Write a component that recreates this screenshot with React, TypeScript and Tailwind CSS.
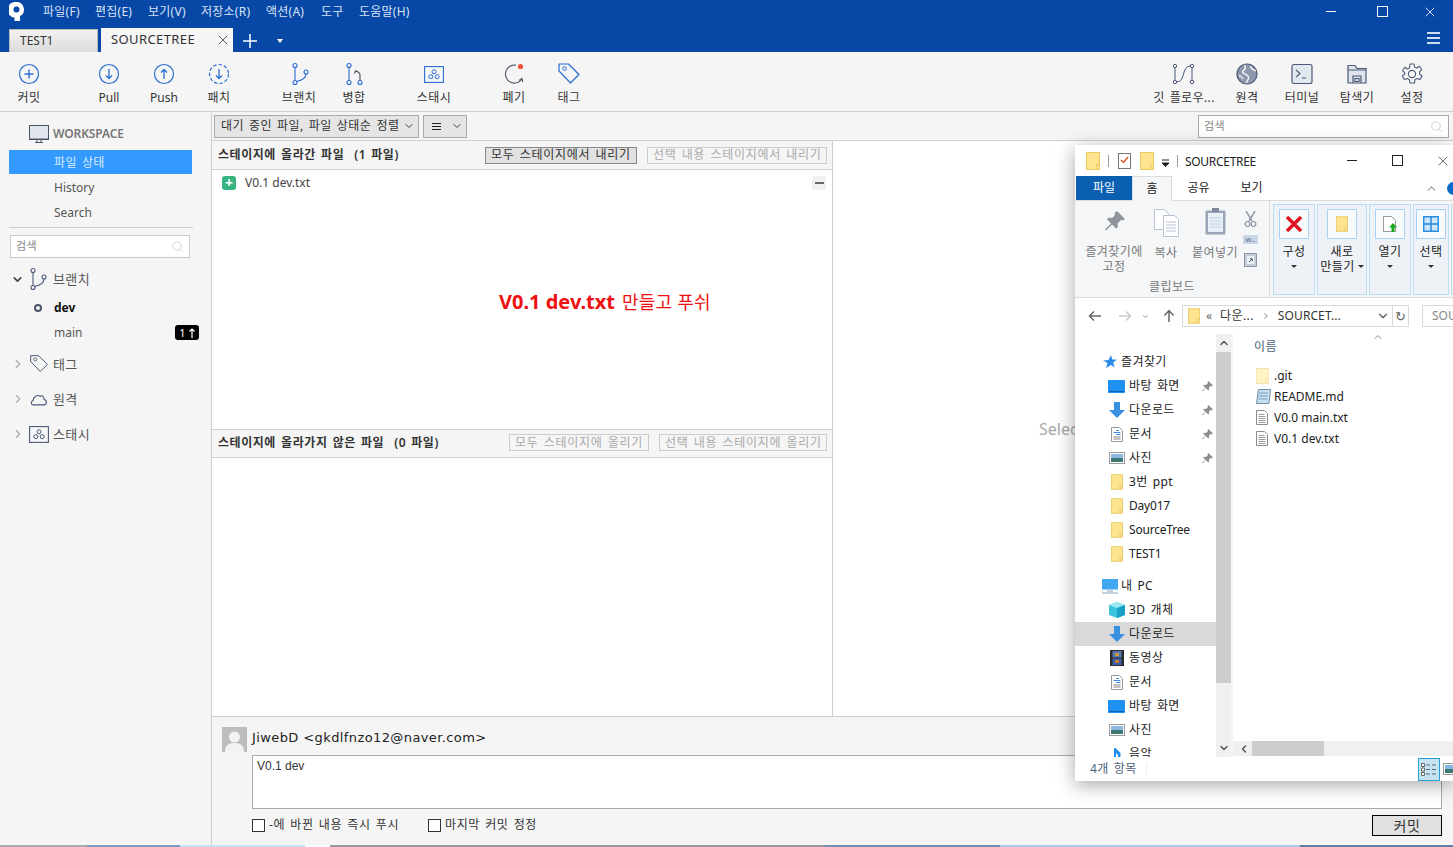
import type { ReactNode } from "react";
import { ChevronDown, ChevronRight, ChevronUp, Search, X } from "lucide-react";

const BLUE = "#2a6dd2";
const SLATE = "#4a5a78";
// Korean glyphs run wider in the original UI font
const KO = "tracking-[0.4px] [word-spacing:1.5px]";
const ko = (s: string) => (/[가-힣]/.test(s) ? KO : "");

function Ico({ children, w = 24, h = 24, vb }: { children: ReactNode; w?: number; h?: number; vb?: string }) {
  return (
    <svg width={w} height={h} viewBox={vb ?? `0 0 ${w} ${h}`} fill="none" className="shrink-0">
      {children}
    </svg>
  );
}

function CircleIcon({ kind }: { kind: "plus" | "down" | "up" | "fetch" }) {
  return (
    <Ico>
      <circle cx="12" cy="12" r="9.5" stroke={BLUE} strokeWidth="1.2" strokeDasharray={kind === "fetch" ? "3.5 2" : undefined} />
      {kind === "plus" && <path d="M12 7.5v9M7.5 12h9" stroke={BLUE} strokeWidth="1.4" />}
      {(kind === "down" || kind === "fetch") && <path d="M12 7v9.5M9 13.5l3 3 3-3" stroke={BLUE} strokeWidth="1.3" />}
      {kind === "up" && <path d="M12 17V7.5M9 10.5l3-3 3 3" stroke={BLUE} strokeWidth="1.3" />}
    </Ico>
  );
}

function BranchIcon({ color = BLUE }: { color?: string }) {
  return (
    <Ico>
      <circle cx="8" cy="3.5" r="2" stroke={color} strokeWidth="1.1" />
      <circle cx="8" cy="20.5" r="2" stroke={color} strokeWidth="1.1" />
      <circle cx="19" cy="10" r="2" stroke={color} strokeWidth="1.1" />
      <path d="M8 5.5v13M19 12c0 4-5 6.5-9.5 7.5" stroke={color} strokeWidth="1.1" />
    </Ico>
  );
}

function MergeIcon() {
  return (
    <Ico>
      <circle cx="7" cy="3.5" r="2" stroke={BLUE} strokeWidth="1.1" />
      <circle cx="7" cy="20.5" r="2" stroke={BLUE} strokeWidth="1.1" />
      <circle cx="18" cy="20.5" r="2" stroke={BLUE} strokeWidth="1.1" />
      <path d="M7 5.5v13" stroke={BLUE} strokeWidth="1.1" />
      <path d="M18 18.5V13c0-2-1.5-3-3.5-3.5M12.5 11.5l1-2.5 2.5 .5" stroke="#444c5c" strokeWidth="1.1" />
    </Ico>
  );
}

function StashIcon({ color = BLUE, w = 20, h = 17 }: { color?: string; w?: number; h?: number }) {
  return (
    <Ico w={w} h={h} vb="0 0 20 17">
      <rect x=".6" y=".6" width="18.8" height="15.8" stroke={color} strokeWidth="1.1" fill="#fff" fillOpacity=".2" />
      <circle cx="10" cy="5.7" r="2" stroke={color} strokeWidth="1" />
      <circle cx="6.8" cy="10.7" r="2" stroke={color} strokeWidth="1" />
      <circle cx="13.2" cy="10.7" r="2" stroke={color} strokeWidth="1" />
    </Ico>
  );
}

function DiscardIcon() {
  return (
    <Ico>
      <path d="M14 3.2A9 9 0 1 0 20 17" stroke="#5a6270" strokeWidth="1.2" />
      <path d="M17 18.5l3-2 .8 3.6" stroke="#5a6270" strokeWidth="1.2" />
      <circle cx="18.5" cy="4.5" r="2.6" fill="#f0533a" />
    </Ico>
  );
}

function TagIcon({ color = BLUE, size = 24 }: { color?: string; size?: number }) {
  return (
    <svg width={size} height={size} viewBox="0 0 24 24" fill="none" className="shrink-0">
      <path d="M2 2h9.500L22 12.500 13.500 21 2 9z" stroke={color} strokeWidth="1.2" strokeLinejoin="round" />
      <circle cx="7.500" cy="6.500" r="1.800" stroke={color} strokeWidth="1" />
    </svg>
  );
}

function FlowIcon() {
  return (
    <Ico>
      <circle cx="3" cy="4" r="1.7" stroke={SLATE} strokeWidth="1" />
      <circle cx="3" cy="20" r="1.7" stroke={SLATE} strokeWidth="1" />
      <circle cx="20" cy="4" r="1.7" stroke={SLATE} strokeWidth="1" />
      <circle cx="20" cy="20" r="1.7" stroke={SLATE} strokeWidth="1" />
      <path d="M3 6v12M20 6v12M18.500 4C9 4 14 20 4.500 20" stroke={SLATE} strokeWidth="1" />
    </Ico>
  );
}

function GlobeIcon() {
  return (
    <Ico>
      <circle cx="12" cy="12" r="10" fill="#8d98ae" stroke={SLATE} strokeWidth="1.2" />
      <path d="M9 3c3 2 1 4-1 6s3 3 5 5-1 5-2 7M16 4c-1 3 3 4 5 5M4 14c2-1 3 1 4 3" stroke="#f5f5f5" strokeWidth="1.4" />
    </Ico>
  );
}

function TerminalIcon() {
  return (
    <Ico>
      <rect x="2" y="2.5" width="20" height="19" rx="2" fill="#e3e7ee" stroke={SLATE} strokeWidth="1.2" />
      <path d="M6 8l4 3.5L6 15M12 16h4" stroke={SLATE} strokeWidth="1.1" />
    </Ico>
  );
}

function ExplorerIcon() {
  return (
    <Ico>
      <path d="M3 21V3.5h7l2 3h9V21z" fill="#dfe3ea" stroke={SLATE} strokeWidth="1.2" />
      <path d="M3 8h18" stroke={SLATE} strokeWidth="1" />
      <path d="M8 21v-7h8v7M10 16.5h4v3h-4z" stroke={SLATE} strokeWidth="1.2" />
    </Ico>
  );
}

function GearIcon() {
  return (
    <Ico>
      <path
        d="M10 2h4l.6 3 2.2 1 2.6-1.7 2.4 3.4-2.2 2 .1 2.5 2.4 1.7-2.1 3.6-2.9-1.1-2.1 1.3-.5 3.3H10l-.6-3.3-2.2-1.3-2.9 1.1-2-3.6 2.4-1.7V10.7l-2.2-2L4.800 5.300 7.300 7l2.2-1z"
        stroke={SLATE}
        strokeWidth="1.1"
        strokeLinejoin="round"
      />
      <circle cx="12" cy="12" r="3.6" stroke={SLATE} strokeWidth="1.1" />
    </Ico>
  );
}

function MonitorIcon() {
  return (
    <Ico w={20} h={18}>
      <rect x=".5" y=".5" width="19" height="13.5" fill="#e1e5ec" stroke="#4a5568" />
      <path d="M0 14.5h20M6 17.5h8M8 15v2M12 15v2" stroke="#4a5568" />
    </Ico>
  );
}

function CloudIcon() {
  return (
    <Ico w={18} h={13} vb="0 0 20 14">
      <path d="M5 13H3.500C1 13 .5 9 3.500 8.200 3.500 4 8 1 11.500 3.500 14 1.500 16 5 15.500 7c3.500.3 4 6-.5 6z" stroke={SLATE} strokeWidth="1.2" />
    </Ico>
  );
}

function ToolButton({ icon, label, className = "" }: { icon: ReactNode; label: string; className?: string }) {
  return (
    <div className={`flex w-[55px] shrink-0 flex-col items-center ${className}`}>
      <div className="flex h-[24px] items-center justify-center">{icon}</div>
      <span className={`mt-[3px] whitespace-nowrap pl-px text-[12px] leading-[17px] text-[#333] ${ko(label)}`}>{label}</span>
    </div>
  );
}

function Folder({ w = 14, h = 18, pale = false }: { w?: number; h?: number; pale?: boolean }) {
  return (
    <svg width={w} height={h} viewBox="0 0 14 18" className="shrink-0">
      <rect x=".5" y=".5" width="13" height="17" fill={pale ? "#fff3c8" : "#ffe48f"} stroke={pale ? "#f0dfa0" : "#e9c95f"} />
      <path d="M10.500 17.500v-5h3" fill="none" stroke={pale ? "#f0dfa0" : "#e9c95f"} />
    </svg>
  );
}

function TextDoc() {
  return (
    <svg width={12} height={15} viewBox="0 0 12 15" className="shrink-0">
      <path d="M.5.5h8l3 3v11H.5z" fill="#fff" stroke="#8a8a8a" />
      <path d="M2.500 4.500h6M2.500 6.500h7M2.500 8.500h7M2.500 10.500h7M2.500 12.500h7" stroke="#9a9a9a" />
    </svg>
  );
}

function NavIcon({ kind }: { kind: string }) {
  if (kind === "star")
    return (
      <svg width={14} height={14} viewBox="0 0 14 14" className="shrink-0">
        <path d="M8 0l1.300 4.600H14l-3.800 3 1.400 5L8 10 3 13l1.500-5L0 5.500l5.500-.6z" fill="#2b8be6" />
      </svg>
    );
  if (kind === "desk")
    return (
      <svg width={17} height={13} viewBox="0 0 17 13" className="shrink-0">
        <rect width="17" height="13" rx="1" fill="#1e90f0" />
        <path d="M1 11.500h15" stroke="#0a5fb0" />
      </svg>
    );
  if (kind === "down")
    return (
      <svg width={16} height={16} viewBox="0 0 16 16" className="shrink-0">
        <path d="M5 0h6v8h5l-8 8-8-8h5z" fill="#3a8fe0" />
      </svg>
    );
  if (kind === "doc")
    return (
      <svg width={12} height={15} viewBox="0 0 12 15" className="shrink-0">
        <path d="M.5.5h8l3 3v11H.5z" fill="#fff" stroke="#999" />
        <path d="M5 3.500h3M2.500 5.500h7M5 7.500h4.500" stroke="#3a8fe0" />
        <path d="M2.500 10h7M2.500 12h7" stroke="#888" />
      </svg>
    );
  if (kind === "pic")
    return (
      <svg width={16} height={12} viewBox="0 0 16 12" className="shrink-0">
        <rect x=".5" y=".5" width="15" height="11" fill="#fff" stroke="#999" />
        <rect x="2" y="2" width="12" height="4" fill="#8ab8e0" />
        <rect x="2" y="6" width="12" height="4" fill="#3f7a70" />
      </svg>
    );
  if (kind === "pc")
    return (
      <svg width={17} height={15} viewBox="0 0 17 15" className="shrink-0">
        <rect width="16" height="10.500" fill="#3fa8f0" />
        <path d="M5 12h6M0 14h16" stroke="#8aa6c0" strokeWidth="1.200" />
      </svg>
    );
  if (kind === "cube")
    return (
      <svg width={16} height={16} viewBox="0 0 16 16" className="shrink-0">
        <path d="M8 0l8 3v10l-8 3-8-3V3z" fill="#3cc4dc" />
        <path d="M0 3l8 3 8-3-8-3z" fill="#9ce8f0" />
        <path d="M8 6v10l8-3V3z" fill="#1aa0c4" />
      </svg>
    );
  if (kind === "film")
    return (
      <svg width={14} height={16} viewBox="0 0 14 16" className="shrink-0">
        <rect width="14" height="16" fill="#2c2c2c" />
        <rect x="2.500" y="1" width="9" height="6.500" fill="#5478b0" />
        <rect x="2.500" y="8.500" width="9" height="6.500" fill="#3a62a8" />
        <rect x="5" y="3" width="4" height="3" fill="#c89a40" />
        <rect x="5" y="10" width="4" height="3" fill="#c87a30" />
      </svg>
    );
  if (kind === "music")
    return (
      <svg width={8} height={12} viewBox="0 0 8 12" className="shrink-0">
        <path d="M1 0h1.500l5 5v7H5V7L3 5v7H1z" fill="#1e90f0" />
      </svg>
    );
  return <Folder w={12} h={16} />;
}

function Pin() {
  return (
    <svg width={11} height={11} viewBox="0 0 11 11" className="shrink-0">
      <path d="M6.500 0L11 4.500 9.800 5.200 8.600 5l-1.700 1.700.2 2L6.200 9.500 3.800 7 .6 10.400 0 10l3.400-3.200L1.200 4.500 2 3.800l2 .2L5.800 2.300 5.600 1z" fill="#8b8f96" />
    </svg>
  );
}

const MENUS = [
  ["파일(F)", "w-[52px]"],
  ["편집(E)", "w-[53px]"],
  ["보기(V)", "w-[53px]"],
  ["저장소(R)", "w-[65px]"],
  ["액션(A)", "w-[55px]"],
  ["도구", "w-[38px]"],
  ["도움말(H)", "w-[60px]"],
];

const NAV: { kind: string; label: string; pin?: boolean; sel?: boolean; root?: boolean; gap?: boolean }[] = [
  { kind: "star", label: "즐겨찾기", root: true },
  { kind: "desk", label: "바탕 화면", pin: true },
  { kind: "down", label: "다운로드", pin: true },
  { kind: "doc", label: "문서", pin: true },
  { kind: "pic", label: "사진", pin: true },
  { kind: "folder", label: "3번 ppt" },
  { kind: "folder", label: "Day017" },
  { kind: "folder", label: "SourceTree" },
  { kind: "folder", label: "TEST1" },
  { kind: "pc", label: "내 PC", root: true, gap: true },
  { kind: "cube", label: "3D 개체" },
  { kind: "down", label: "다운로드", sel: true },
  { kind: "film", label: "동영상" },
  { kind: "doc", label: "문서" },
  { kind: "desk", label: "바탕 화면" },
  { kind: "pic", label: "사진" },
  { kind: "music", label: "음악" },
];

function Explorer() {
  return (
    <div className="absolute left-[1075px] top-[145px] flex h-[636px] w-[378px] flex-col overflow-hidden bg-white text-[12px] text-[#222] shadow-[0_4px_18px_rgba(0,0,0,0.35)]">
      {/* title */}
      <div className="flex h-[31px] shrink-0 items-center pl-[11px]">
        <Folder />
        <div className="ml-[8px] h-[12px] w-px bg-[#999]" />
        <svg width={13} height={17} viewBox="0 0 13 17" className="ml-[9px] shrink-0">
          <rect x=".5" y="1.500" width="12" height="15" fill="#fff" stroke="#777" />
          <path d="M3 8l2.500 2.500L10 5" fill="none" stroke="#e0562a" strokeWidth="1.400" />
        </svg>
        <div className="ml-[9px]">
          <Folder />
        </div>
        <svg width={9} height={8} viewBox="0 0 9 8" className="ml-[7px] mt-[4px] shrink-0">
          <path d="M1 1h7M1 4h7L4.500 7.500z" stroke="#222" fill="#222" />
        </svg>
        <div className="ml-[7px] h-[12px] w-px bg-[#999]" />
        <span className="ml-[7px] pt-[2px] text-[12px] tracking-[-0.3px]">SOURCETREE</span>
        <div className="ml-auto flex items-center pr-[2px]">
          <div className="h-px w-[10px] bg-[#222]" />
          <div className="ml-[35px] size-[11px] border border-[#222]" />
          <X size={16} strokeWidth={1} color="#222" className="ml-[32px]" />
        </div>
      </div>
      {/* tabs */}
      <div className="flex h-[25px] shrink-0 items-stretch border-b border-[#dadbdc] pl-px">
        <div className="flex w-[56px] items-center justify-center bg-[#0a5fb0] text-white">파일</div>
        <div className="-mb-px flex w-[40px] items-center justify-center border-x border-t border-[#dadbdc] bg-[#f5f6f7]">홈</div>
        <div className="flex w-[53px] items-center justify-center">공유</div>
        <div className="flex w-[53px] items-center justify-center">보기</div>
        <ChevronUp size={13} color="#999" className="ml-auto mr-[9px] self-center" />
        <div className="mr-[-7px] size-[13px] self-center rounded-full bg-[#0a6cc8]" />
      </div>
      {/* ribbon */}
      <div className="flex h-[97px] shrink-0 border-b border-[#dadbdc] bg-[#f5f6f7] text-[#222]">
        <div className="flex w-[195px] shrink-0 flex-col border-r border-[#dadbdc] text-[#777]">
          <div className="flex flex-1 pl-[8px] pt-[10px]">
            <div className="flex w-[62px] flex-col items-center">
              <svg width={22} height={22} viewBox="0 0 22 22">
                <path d="M14 0l8 8-2 1.500-2-.5-3.500 3.500.5 3.500-2 1.500-4-4-6 6-1-1 6-6-4-4 1.500-2 3.500.5L12 4 11.500 2z" fill="#8f949c" />
              </svg>
              <span className={`mt-[11px] text-center leading-[15px] ${KO}`}>즐겨찾기에 고정</span>
            </div>
            <div className="ml-[4px] flex w-[34px] flex-col items-center">
              <svg width={25} height={28} viewBox="0 0 25 28" className="-mt-[2px]">
                <path d="M.5.500h10l4 4v16H.5z" fill="#fff" stroke="#b8c4d4" />
                <path d="M9.500 6.500h11l4 4v17h-15z" fill="#fff" stroke="#b8c4d4" />
                <path d="M12 13h10M12 16h10M12 19h10M12 22h10" stroke="#b8c4d4" />
              </svg>
              <span className={`mt-[7px] ${KO}`}>복사</span>
            </div>
            <div className="ml-[8px] flex w-[48px] flex-col items-center">
              <svg width={21} height={28} viewBox="0 0 21 28" className="-mt-[4px]">
                <rect x=".5" y="3.500" width="20" height="24" rx="1" fill="#9aa5b5" />
                <rect x="3" y="6" width="15" height="19" fill="#eaf0f7" />
                <rect x="7" y="1" width="7" height="4" fill="#7f8a9a" />
                <path d="M5 11h11M5 14h11M5 17h11M5 20h11" stroke="#bcd0e4" />
              </svg>
              <span className={`mt-[9px] whitespace-nowrap ${KO}`}>붙여넣기</span>
            </div>
            <div className="ml-[4px] flex flex-col items-center gap-[8px]">
              <svg width={13} height={16} viewBox="0 0 13 16">
                <path d="M2 0l6 10M11 0L5 10" stroke="#8f98a6" strokeWidth="1.500" />
                <circle cx="3.500" cy="13" r="2.500" fill="none" stroke="#6c7a90" />
                <circle cx="9.500" cy="13" r="2.500" fill="none" stroke="#6c7a90" />
              </svg>
              <div className="flex h-[9px] w-[15px] items-center justify-center bg-[#c8d8e8] text-[6px] leading-none text-[#557]">W...</div>
              <svg width={13} height={15} viewBox="0 0 13 15">
                <rect x=".5" y="1.500" width="12" height="13" fill="#c5cdd8" stroke="#8a95a5" />
                <rect x="3" y="4" width="7" height="8" fill="#eef2f6" />
                <path d="M5 10l3-3M6 6.800h2.200V9" stroke="#405070" fill="none" />
              </svg>
            </div>
          </div>
          <div className={`pb-[3px] text-center leading-[15px] ${KO}`}>클립보드</div>
        </div>
        <div className="flex gap-[2px] pl-[3px] pt-[3px]">
          <RibbonBlock w="w-[42px]" box={
            <svg width={16} height={16} viewBox="0 0 16 16"><path d="M1 1l14 14M15 1L1 15" stroke="#e01020" strokeWidth="3.400" /></svg>
          }>
            <span>구성</span>
            <Caret className="mt-[6px]" />
          </RibbonBlock>
          <RibbonBlock w="w-[50px]" box={<Folder w={12} h={16} />}>
            <span>새로</span>
            <span className="flex items-center gap-[3px]">만들기<Caret /></span>
          </RibbonBlock>
          <RibbonBlock w="w-[42px]" box={
            <svg width={14} height={17} viewBox="0 0 14 17"><path d="M.5.500h8l4 4v11H.5z" fill="#fff" stroke="#999" /><path d="M10 7l4 4.500h-2.500V16h-3v-4.500H6z" fill="#1aa820" /></svg>
          }>
            <span>열기</span>
            <Caret className="mt-[6px]" />
          </RibbonBlock>
          <RibbonBlock w="w-[36px]" box={
            <svg width={16} height={16} viewBox="0 0 16 16"><rect width="16" height="16" fill="#2a8ee0" /><rect x="1.500" y="1.500" width="5.700" height="5.700" fill="#cfe6fa" /><rect x="8.800" y="1.500" width="5.700" height="5.700" fill="#cfe6fa" /><rect x="1.500" y="8.800" width="5.700" height="5.700" fill="#cfe6fa" /><rect x="8.800" y="8.800" width="5.700" height="5.700" fill="#cfe6fa" /></svg>
          }>
            <span>선택</span>
            <Caret className="mt-[6px]" />
          </RibbonBlock>
          <div className="h-[91px] w-[10px] border border-r-0 border-[#bcdcf4] bg-[#eef2f6]" />
        </div>
      </div>
      {/* address */}
      <div className="flex h-[36px] shrink-0 items-center text-[#333]">
        <svg width={14} height={12} viewBox="0 0 14 12" className="ml-[13px] shrink-0"><path d="M13 6H2M6 1.500L1.500 6 6 10.500" fill="none" stroke="#666" strokeWidth="1.500" /></svg>
        <svg width={14} height={12} viewBox="0 0 14 12" className="ml-[16px] shrink-0"><path d="M1 6h11M8 1.500L12.500 6 8 10.500" fill="none" stroke="#ccc" strokeWidth="1.500" /></svg>
        <ChevronDown size={9} color="#777" strokeWidth={2} className="ml-[9px] shrink-0" />
        <svg width={12} height={14} viewBox="0 0 12 14" className="ml-[13px] shrink-0"><path d="M6 13V2M1.500 6.500L6 1.500l4.500 5" fill="none" stroke="#666" strokeWidth="1.500" /></svg>
        <div className="ml-[7px] flex h-[22px] w-[227px] shrink-0 items-center border border-[#d9d9d9] pl-[5px]">
          <Folder w={12} h={16} />
          <span className="ml-[6px] text-[#666]">«</span>
          <span className={`ml-[8px] ${KO}`}>다운...</span>
          <ChevronRight size={10} color="#666" className="ml-[7px]" />
          <span className="ml-[7px] tracking-[0.1px]">SOURCET...</span>
          <ChevronDown size={14} color="#555" className="ml-auto" />
          <div className="ml-[2px] flex h-full w-[16px] items-center justify-center border-l border-[#d9d9d9] text-[13px] leading-none text-[#666]">↻</div>
        </div>
        <div className="ml-[13px] flex h-[22px] flex-1 items-center overflow-hidden border-y border-l border-[#d9d9d9] pl-[9px] text-[#888]">SOU</div>
      </div>
      {/* content */}
      <div className="flex min-h-0 flex-1">
        <div className="relative flex w-[141px] shrink-0 flex-col overflow-hidden pt-[16px]">
          {NAV.map((n) => (
            <div
              key={n.label + n.kind + String(n.sel) + String(n.pin)}
              className={`flex h-[24px] shrink-0 items-center ${n.gap ? "mt-[8px]" : ""} ${n.sel ? "bg-[#d9d9d9]" : ""}`}
            >
              <div className={`flex shrink-0 justify-center ${n.root ? "ml-[25px] w-[20px]" : "ml-[29px] w-[25px]"}`}>
                <NavIcon kind={n.kind} />
              </div>
              <span className={`whitespace-nowrap ${ko(n.label) || "tracking-[-0.2px]"} ${n.root ? "ml-[1px]" : ""}`}>{n.label}</span>
              {n.pin && (
                <div className="ml-auto mr-[3px]">
                  <Pin />
                </div>
              )}
            </div>
          ))}
        </div>
        {/* tree scrollbar */}
        <div className="flex w-[15px] shrink-0 flex-col bg-[#f0f0f0]">
          <ChevronUp size={12} strokeWidth={3} color="#555" className="mx-auto mt-[3px] h-[12px] shrink-0" />
          <div className="mt-[3px] h-[331px] shrink-0 bg-[#cdcdcd]" />
          <ChevronDown size={12} strokeWidth={3} color="#555" className="mx-auto mt-auto mb-[3px] shrink-0" />
        </div>
        <div className="relative flex min-w-0 flex-1 flex-col border-l-2 border-[#f5f5f5] pl-[6px]">
          <ChevronUp size={12} color="#888" className="absolute left-[139px] -top-[3px]" />
          <div className={`pl-[15px] pt-[5px] leading-[15px] text-[#4c607a] ${KO}`}>이름</div>
          <div className="mt-[11px] flex flex-1 flex-col pl-[17px] text-[#222]">
            <FileRow icon={<Folder w={13} h={16} pale />} label=".git" />
            <FileRow icon={
              <svg width={15} height={15} viewBox="0 0 15 15"><path d="M2.500.500h12l-1.500 14H.5z" fill="#c8dff0" stroke="#6a90b0" /><path d="M3 4h9M2.800 7h9M2.500 10h9" stroke="#7a9cc0" /></svg>
            } label="README.md" />
            <FileRow icon={<TextDoc />} label="V0.0 main.txt" />
            <FileRow icon={<TextDoc />} label="V0.1 dev.txt" />
          </div>
          <div className="-ml-[6px] mb-px flex h-[15px] shrink-0 items-center bg-[#f0f0f0] pl-[2px]">
            <ChevronDown size={12} strokeWidth={3} color="#555" className="ml-[3px] rotate-90" />
            <div className="ml-[2px] h-full w-[72px] bg-[#cdcdcd]" />
          </div>
        </div>
      </div>
      {/* status */}
      <div className="flex h-[24px] shrink-0 items-center pl-[15px] text-[#4c607a]">
        <span className={KO}>4개 항목</span>
        <div className="ml-[9px] h-[12px] w-px bg-[#eee]" />
        <div className="ml-auto flex h-full items-center">
          <div className="flex h-[23px] w-[22px] items-center justify-center border border-[#26a0da] bg-[#c4e4f6]">
            <svg width={16} height={13} viewBox="0 0 16 13"><path d="M.5.500h3v3h-3zM.5 5h3v3h-3zM.5 9.500h3v3h-3z" fill="#fff" stroke="#666" /><path d="M5 2h4M11 2h4M5 6.500h4M11 6.500h4M5 11h4M11 11h4" stroke="#666" /></svg>
          </div>
          <div className="ml-[3px] w-[10px] overflow-hidden">
            <svg width={16} height={12} viewBox="0 0 16 12"><rect x=".5" y=".5" width="15" height="11" fill="#fff" stroke="#999" /><rect x="2" y="2" width="12" height="4" fill="#8ab8e0" /><rect x="2" y="6" width="12" height="4" fill="#3f7a70" /></svg>
          </div>
        </div>
      </div>
    </div>
  );
}

function Caret({ className = "" }: { className?: string }) {
  return <div className={`mx-auto size-0 border-x-[3px] border-t-[3px] border-x-transparent border-t-[#333] ${className}`} />;
}

function RibbonBlock({ w, box, children }: { w: string; box: ReactNode; children: ReactNode }) {
  return (
    <div className={`${w} flex h-[91px] shrink-0 flex-col items-center border border-[#bcdcf4] bg-[#eef2f6] px-[5px] pt-[4px]`}>
      <div className="flex h-[30px] w-[30px] shrink-0 items-center justify-center self-center border border-[#a8d2f4] bg-[#f7f9fb]">{box}</div>
      <div className={`mt-[5px] flex flex-col items-center whitespace-nowrap leading-[15px] ${KO}`}>{children}</div>
    </div>
  );
}

function FileRow({ icon, label }: { icon: ReactNode; label: string }) {
  return (
    <div className="flex h-[21px] items-center">
      <div className="flex w-[18px] shrink-0">{icon}</div>
      <span>{label}</span>
    </div>
  );
}

function SearchBox({ className = "" }: { className?: string }) {
  return (
    <div className={`flex items-center justify-between border bg-white pl-[5px] pr-[5px] text-[11px] text-[#888] ${className}`}>
      <span className={KO}>검색</span>
      <Search size={13} color="#c4c4c4" strokeWidth={1.3} />
    </div>
  );
}

function TreeRow({ icon, label, mt }: { icon: ReactNode; label: string; mt: string }) {
  return (
    <div className={`flex h-[24px] items-center pl-[11px] ${mt}`}>
      <ChevronRight size={14} color="#aaa" strokeWidth={2} />
      <div className="ml-[4px] flex w-[24px] justify-start">{icon}</div>
      <span className={`pt-[2px] text-[13px] text-[#555] ${KO}`}>{label}</span>
    </div>
  );
}

function StageHeader({ title, count, primary, secondary, dim = false, className = "" }: { title: string; count: string; primary: string; secondary: string; dim?: boolean; className?: string }) {
  return (
    <div className={`flex shrink-0 items-center bg-[#f5f5f5] pl-[6px] pr-[5px] text-[12px] tracking-[0.55px] [word-spacing:1.5px] ${className}`}>
      <span className="font-semibold whitespace-nowrap text-[#333]">{title}</span>
      <span className="ml-[10px] font-semibold whitespace-nowrap text-[#333]">{count}</span>
      <div className={`ml-auto flex h-[17px] items-center border px-[5px] whitespace-nowrap leading-none tracking-[0.7px] ${dim ? "w-[140px] border-[#ccc] text-[#aaa]" : "w-[152px] border-[#888] bg-[#e1e1e1] text-[#333]"}`}>
        {primary}
      </div>
      <div className={`ml-[10px] flex h-[17px] items-center border border-[#ccc] px-[5px] whitespace-nowrap leading-none tracking-[0.7px] text-[#aaa] ${dim ? "w-[168px]" : "w-[180px]"}`}>
        {secondary}
      </div>
    </div>
  );
}

export default function App() {
  return (
    <div className="relative flex h-[847px] w-[1453px] flex-col overflow-hidden bg-[#f5f5f5] font-['Noto_Sans','Noto_Sans_CJK_KR',sans-serif] text-[12px] text-[#333]">
      {/* title bar */}
      <div className="h-[52px] shrink-0 bg-[#0747a6]">
        <div className="flex h-[23px] items-center pl-[9px]">
          <svg width={15} height={19} viewBox="0 0 15 19" className="shrink-0">
            <path fillRule="evenodd" d="M7.500 0a7.500 7.500 0 0 1 3.500 14.100V19H5.500v-3.200A7.500 7.500 0 0 1 7.500 0zm0 4.500a3 3 0 1 0 0 6 3 3 0 0 0 0-6z" fill="#fff" />
          </svg>
          <div className="ml-[19px] flex text-[12px] tracking-[0.25px] text-[#d7e3f5]">
            {MENUS.map(([label, w]) => (
              <span key={label} className={`${w} whitespace-nowrap`}>{label}</span>
            ))}
          </div>
          <div className="ml-auto flex items-center text-white">
            <div className="h-px w-[10px] bg-white" />
            <div className="ml-[41px] h-[11px] w-[11px] border border-white" />
            <X size={16} strokeWidth={1.2} className="ml-[34px] mr-[15px]" />
          </div>
        </div>
        <div className="flex h-[29px] items-end pl-[9px]">
          <div className="flex h-[23px] w-[89px] items-center border border-b-0 border-[#b8b8b8] bg-gradient-to-b from-[#f2f2f2] to-[#dcdcdc] pl-[10px] text-[#333]">TEST1</div>
          <div className="ml-[3px] flex h-[24px] w-[132px] items-center bg-[#f5f5f5] pl-[10px] text-[13px] tracking-[0.4px] text-[#333]">
            SOURCETREE
            <X size={16} strokeWidth={1.3} color="#444" className="ml-auto mr-[2px]" />
          </div>
          <svg width={14} height={14} viewBox="0 0 14 14" className="mb-[4px] ml-[10px]"><path d="M7 0v14M0 7h14" stroke="#fff" strokeWidth="1.500" /></svg>
          <div className="mb-[9px] ml-[20px] size-0 border-x-[3.5px] border-t-[4px] border-x-transparent border-t-white" />
          <div className="mb-[8px] ml-auto mr-[13px] flex w-[13px] flex-col gap-[3px]">
            <div className="h-[2px] bg-[#cfdcf0]" />
            <div className="h-[2px] bg-[#cfdcf0]" />
            <div className="h-[2px] bg-[#cfdcf0]" />
          </div>
        </div>
      </div>

      {/* toolbar */}
      <div className="flex h-[60px] shrink-0 items-start border-b border-[#cfcfcf] pt-[10px]">
        <ToolButton className="ml-[1px]" icon={<CircleIcon kind="plus" />} label="커밋" />
        <ToolButton className="ml-[25px]" icon={<CircleIcon kind="down" />} label="Pull" />
        <ToolButton icon={<CircleIcon kind="up" />} label="Push" />
        <ToolButton icon={<CircleIcon kind="fetch" />} label="패치" />
        <ToolButton className="ml-[25px]" icon={<BranchIcon />} label="브랜치" />
        <ToolButton icon={<MergeIcon />} label="병합" />
        <ToolButton className="ml-[25px]" icon={<StashIcon />} label="스태시" />
        <ToolButton className="ml-[25px]" icon={<DiscardIcon />} label="폐기" />
        <ToolButton icon={<TagIcon />} label="태그" />
        <div className="ml-auto flex pr-[14px]">
          <ToolButton icon={<FlowIcon />} label="깃 플로우..." className="mr-[8px]" />
          <ToolButton icon={<GlobeIcon />} label="원격" />
          <ToolButton icon={<TerminalIcon />} label="터미널" />
          <ToolButton icon={<ExplorerIcon />} label="탐색기" />
          <ToolButton icon={<GearIcon />} label="설정" />
        </div>
      </div>

      <div className="flex min-h-0 flex-1">
        {/* sidebar */}
        <div className="flex w-[212px] shrink-0 flex-col border-r border-[#cfcfcf] text-[12px]">
          <div className="flex h-[38px] items-center pl-[29px] pt-[5px]">
            <MonitorIcon />
            <span className="ml-[4px] font-semibold tracking-[-0.1px] text-[#777]">WORKSPACE</span>
          </div>
          <div className={`ml-[9px] flex h-[24px] w-[183px] items-center bg-[#3399ff] pl-[45px] pt-px text-[#dcecff] ${KO}`}>파일 상태</div>
          <div className="flex h-[26px] items-center pl-[54px] pt-px text-[#555]">History</div>
          <div className="flex h-[25px] items-center pl-[54px] text-[#555]">Search</div>
          <div className="ml-[9px] mt-[2px] h-px w-[184px] bg-[#cfcfcf]" />
          <SearchBox className="ml-[10px] mt-[7px] h-[23px] w-[180px] border-[#ccc]" />
          <div className="mt-[9px] flex h-[24px] items-center pl-[11px]">
            <ChevronDown size={13} strokeWidth={3} color="#444" />
            <div className="ml-[1px]">
              <BranchIcon color={SLATE} />
            </div>
            <span className={`ml-[4px] pt-[2px] text-[13px] text-[#555] ${KO}`}>브랜치</span>
          </div>
          <div className="mt-[4px] flex h-[25px] items-center pl-[34px] font-bold text-[#111]">
            <div className="mr-[12px] size-[8px] rounded-full border-2 border-[#4a5568]" />
            dev
          </div>
          <div className="flex h-[25px] items-center pl-[54px] text-[#555]">
            main
            <div className="ml-auto mr-[12px] flex h-[15px] w-[24px] items-center justify-center gap-[3px] rounded-[3px] bg-black text-[11px] leading-none text-white">
              1
              <svg width={6} height={10} viewBox="0 0 6 10"><path d="M3 10V1M.5 3.500L3 1l2.500 2.500" fill="none" stroke="#fff" strokeWidth="1.200" /></svg>
            </div>
          </div>
          <TreeRow mt="mt-[7px]" icon={<TagIcon color={SLATE} size={20} />} label="태그" />
          <TreeRow mt="mt-[11px]" icon={<div className="pl-[1px]"><CloudIcon /></div>} label="원격" />
          <TreeRow mt="mt-[11px]" icon={<StashIcon color={SLATE} />} label="스태시" />
        </div>

        {/* main */}
        <div className="flex min-w-0 flex-1 flex-col">
          <div className="flex h-[29px] shrink-0 items-center border-b border-[#cfcfcf] pl-[2px]">
            <div className="flex h-[23px] w-[205px] items-center justify-between border border-[#aaa] bg-[#e5e5e5] pl-[6px] pr-[3px] whitespace-nowrap">
              <span className="tracking-[0.45px] [word-spacing:1.5px]">대기 중인 파일, 파일 상태순 정렬</span>
              <ChevronDown size={12} color="#444" />
            </div>
            <div className="ml-[4px] flex h-[23px] w-[44px] items-center justify-between border border-[#aaa] bg-[#e5e5e5] pl-[8px] pr-[3px]">
              <div className="flex w-[9px] flex-col gap-[2px]">
                <div className="h-px bg-[#222]" />
                <div className="h-px bg-[#222]" />
                <div className="h-px bg-[#222]" />
              </div>
              <ChevronDown size={12} color="#444" />
            </div>
            <SearchBox className="ml-auto mr-[4px] h-[23px] w-[251px] border-[#aaa]" />
          </div>
          <div className="flex min-h-0 flex-1">
            <div className="flex w-[621px] shrink-0 flex-col border-r border-[#cfcfcf]">
              <StageHeader className="h-[29px] border-b border-[#cfcfcf]" title="스테이지에 올라간 파일" count="(1 파일)" primary="모두 스테이지에서 내리기" secondary="선택 내용 스테이지에서 내리기" />
              <div className="relative flex h-[259px] shrink-0 flex-col bg-white">
                <div className="flex h-[26px] items-center pl-[10px] pr-[6px] text-[#444]">
                  <div className="flex size-[14px] items-center justify-center rounded-[3px] bg-[#36b37e] text-[14px] font-bold leading-none text-white">+</div>
                  <span className="ml-[9px]">V0.1 dev.txt</span>
                  <div className="ml-auto flex size-[14px] items-center justify-center rounded-[2px] bg-[#f0f0f0]">
                    <div className="h-[2px] w-[9px] bg-[#666]" />
                  </div>
                </div>
                <div className="absolute left-[287px] top-[120px] flex items-center whitespace-nowrap text-[#ee1111]">
                  <span className="text-[20px] font-bold leading-[24px]">V0.1 dev.txt</span>
                  <span className="ml-[7px] text-[18px] tracking-[0.2px] leading-[24px]">만들고 푸쉬</span>
                </div>
              </div>
              <StageHeader className="h-[29px] border-y border-[#cfcfcf] pb-[2px]" title="스테이지에 올라가지 않은 파일" count="(0 파일)" primary="모두 스테이지에 올리기" secondary="선택 내용 스테이지에 올리기" dim />
              <div className="flex-1 bg-white" />
            </div>
            <div className="flex flex-1 items-center bg-white pl-[206px] text-[16px] text-[#a8a8a8]">Select</div>
          </div>
          {/* commit box */}
          <div className="flex h-[129px] shrink-0 flex-col border-t border-[#cfcfcf] pl-[10px] pr-[11px] pt-[10px]">
            <div className="flex h-[25px] items-center">
              <svg width={25} height={25} viewBox="0 0 25 25" className="shrink-0">
                <rect width="25" height="25" fill="#bdbdbd" />
                <circle cx="12.500" cy="10" r="5.500" fill="#f3f3f3" />
                <path d="M3 25c0-7 4-9 9.500-9s9.500 2 9.500 9z" fill="#f3f3f3" />
              </svg>
              <span className="ml-[5px] whitespace-nowrap pb-[4px] font-['DejaVu_Sans',sans-serif] text-[13px] tracking-[0.4px] text-[#222]">JiwebD &lt;gkdlfnzo12@naver.com&gt;</span>
            </div>
            <div className="ml-[30px] mt-[3px] h-[54px] border border-[#aaa] bg-white pl-[4px] pt-px font-['Liberation_Sans',sans-serif] text-[#333]">V0.1 dev</div>
            <div className="ml-[30px] mt-[5px] flex h-[22px] items-center">
              <div className="size-[13px] border border-[#333] bg-white" />
              <span className="ml-[4px] w-[159px] tracking-[0.6px] [word-spacing:1.5px]">-에 바뀐 내용 즉시 푸시</span>
              <div className="size-[13px] border border-[#333] bg-white" />
              <span className="ml-[4px] tracking-[0.6px] [word-spacing:1.5px]">마지막 커밋 정정</span>
              <div className="ml-auto flex h-[21px] w-[70px] items-center justify-center border border-black bg-[#e1e1e1] text-[14px] tracking-[0.5px]">커밋</div>
            </div>
          </div>
        </div>
      </div>
      {/* sliver of the window behind, visible at the very bottom */}
      <div className="h-[2px] shrink-0 bg-[linear-gradient(90deg,#aaa_0_87px,#7a9cc4_87px_180px,#c8e0f4_180px_305px,#fff_305px_330px,#999_330px_825px,#6f8fb8_825px_1000px,#aac8e8_1000px_1300px,#5f7fa8_1300px)]" />
      <Explorer />
    </div>
  );
}
